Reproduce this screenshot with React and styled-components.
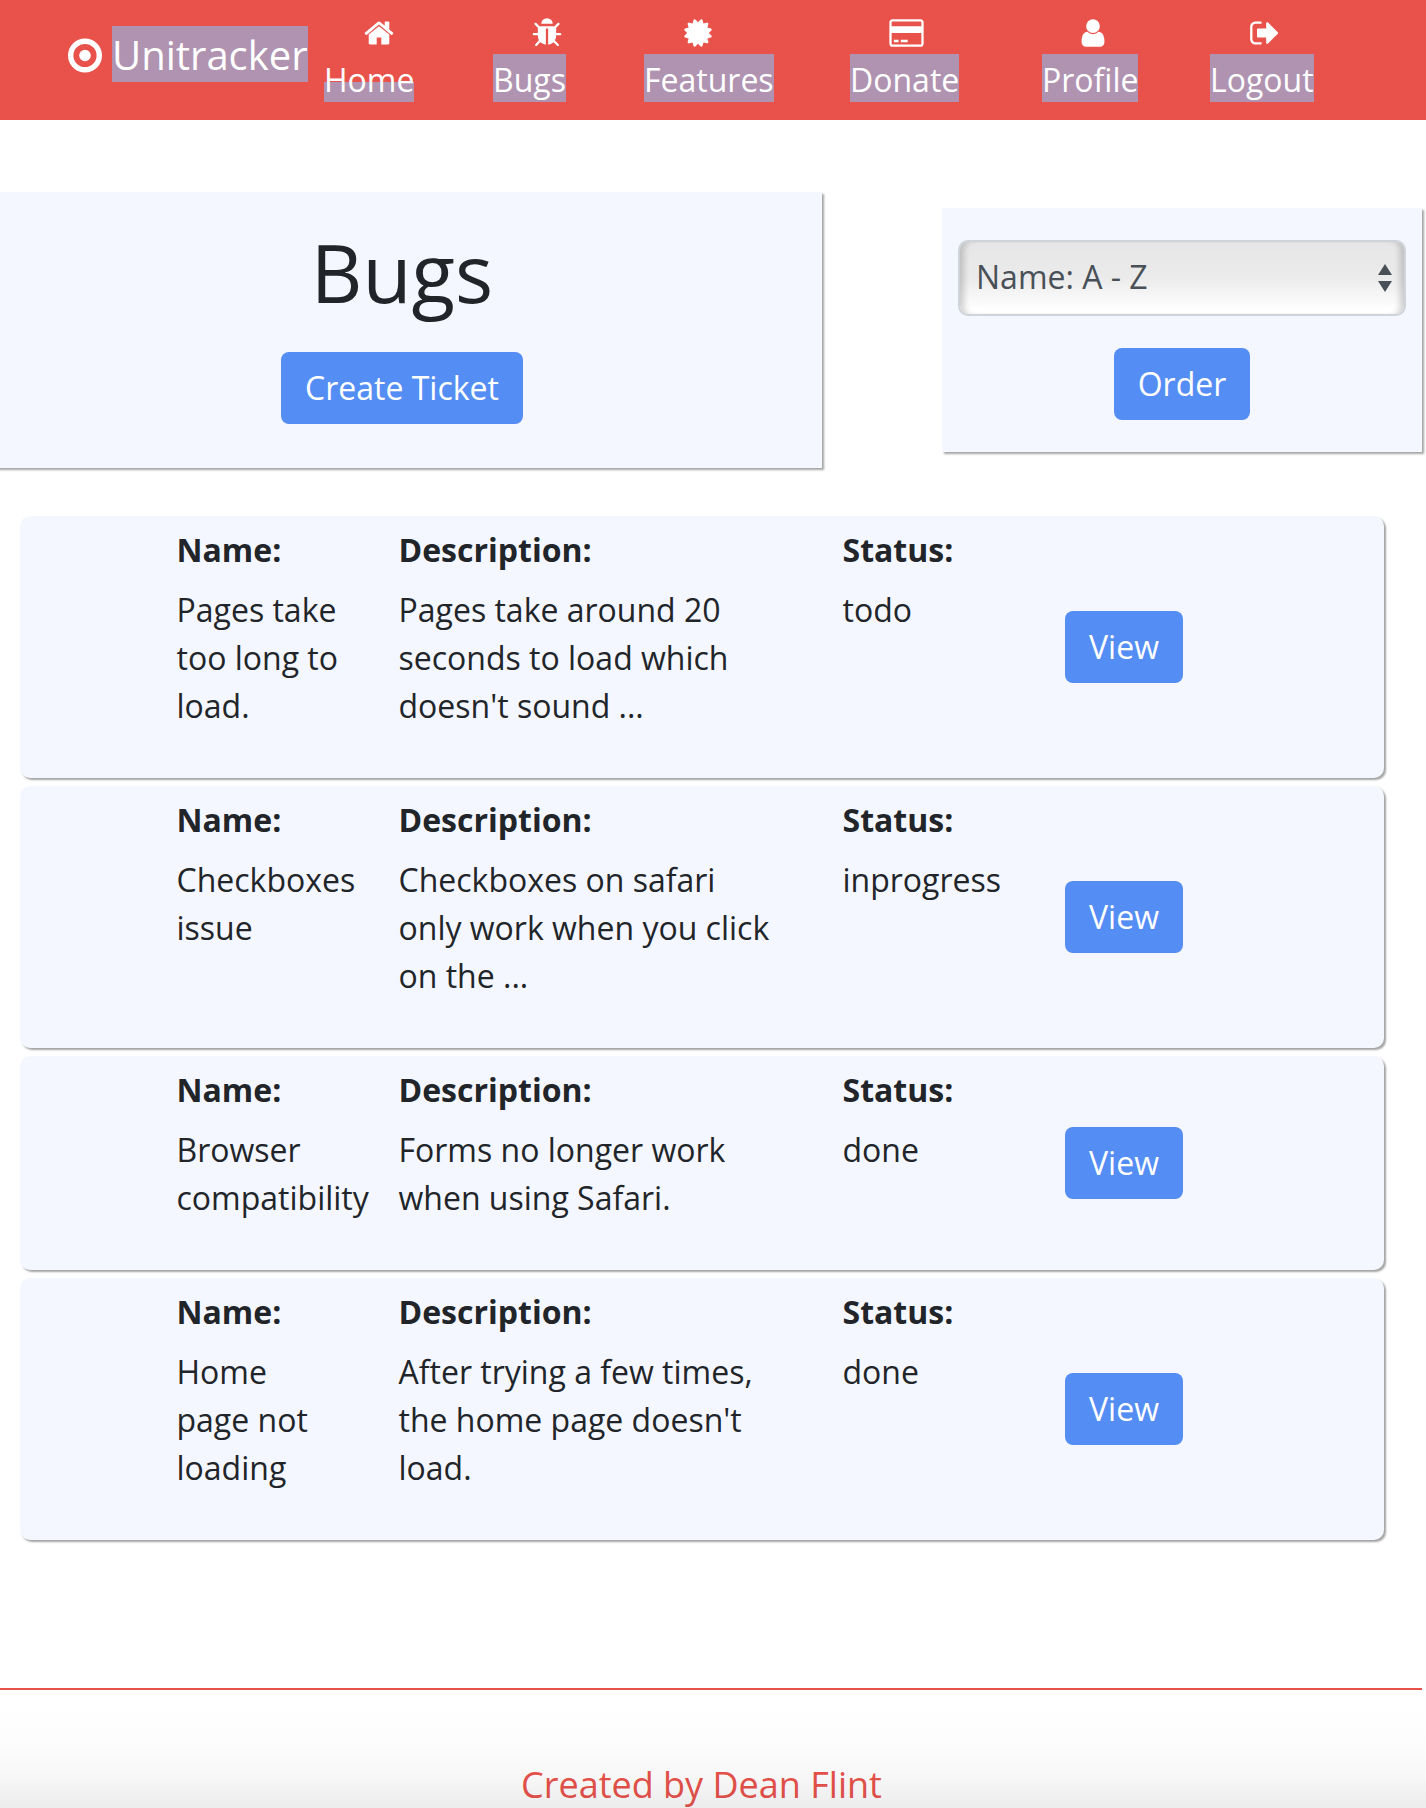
import React from "react";
import styled, { createGlobalStyle, css } from "styled-components";

const GlobalStyle = createGlobalStyle`
  *, *::before, *::after { box-sizing: border-box; }
  body {
    margin: 0;
    background: #fff;
    color: #212529;
    font-family: "Open Sans", "Noto Sans", sans-serif;
    font-size: 32px;
    line-height: 48px;
    overflow: hidden;
  }
`;

const Page = styled.div`
  display: flex;
  flex-direction: column;
  height: 1808px;
  overflow: hidden;
`;

const Header = styled.header`
  display: flex;
  height: 120px;
  background: #e9524b;
  color: #fff;
`;

const Brand = styled.a`
  display: flex;
  align-items: center;
  gap: 10px;
  height: 56px;
  margin: 26px 0 0 68px;
  font-size: 40px;
`;

const BrandName = styled.span`
  width: 196px;
  padding-top: 2px;
  line-height: 54px;
  background: #b093b1;
  white-space: nowrap;
`;

const Nav = styled.nav`
  display: flex;
  padding-top: 17px;
`;

const NavLink = styled.a`
  display: flex;
  flex-direction: column;
  width: ${(p) => p.$width}px;
  margin-left: ${(p) => p.$gap}px;
`;

const NavIcon = styled.svg`
  display: block;
  width: ${(p) => p.$width || 32}px;
  height: 32px;
  margin: 0 0 5px ${(p) => p.$shift}px;
  fill: currentColor;
  flex: none;
`;

const NavLabel = styled.span`
  padding-top: 4px;
  line-height: 44px;
  white-space: nowrap;
  background: ${(p) =>
    p.$partial ? "linear-gradient(transparent 28px, #b093b1 28px)" : "#b093b1"};
`;

const panel = css`
  background: #f4f7ff;
  box-shadow: 2px 2px 2px rgba(0, 0, 0, 0.36);
`;

const Toolbar = styled.section`
  display: flex;
  justify-content: space-between;
  align-items: center;
  margin-top: 72px;
  padding-right: 4px;
  height: 276px;
`;

const TitlePanel = styled.div`
  ${panel}
  display: flex;
  flex-direction: column;
  align-items: center;
  width: 840px;
  height: 276px;
  margin-left: -18px;
  padding-top: 32px;
`;

const Title = styled.h1`
  margin: 0 0 32px;
  font-size: 80px;
  font-weight: 400;
  line-height: 96px;
`;

const SortPanel = styled.form`
  ${panel}
  display: flex;
  flex-direction: column;
  align-items: center;
  gap: 32px;
  width: 480px;
  height: 244px;
  padding: 32px 16px;
`;

const Select = styled.div`
  display: flex;
  justify-content: space-between;
  align-items: center;
  width: 100%;
  height: 76px;
  padding: 0 12px 2px 16px;
  border: 2px solid #ced4da;
  border-radius: 10px;
  color: #495057;
  background: linear-gradient(#e6e6e6, #ebebeb 50%, #fff 94%);
  box-shadow: inset 8px 0 6px -4px rgba(0, 0, 0, 0.18),
    inset -8px 0 6px -4px rgba(0, 0, 0, 0.18);
`;

const Arrows = styled.svg`
  width: 14px;
  height: 28px;
  margin-top: 2px;
  fill: #495057;
`;

const Button = styled.button`
  height: 72px;
  padding: 0 24px;
  border: 0;
  border-radius: 8px;
  background: #548df4;
  color: #fff;
  font: inherit;
  white-space: nowrap;
`;

const TicketList = styled.main`
  display: flex;
  flex-direction: column;
  gap: 8px;
  margin: 48px 42px 0 20px;
`;

const Ticket = styled.article`
  ${panel}
  display: grid;
  grid-template-columns: 222px 444px 222px 222px;
  padding: 10px 0 48px 127px;
  border-radius: 10px;
`;

const Field = styled.div`
  padding: 0 30px 0 29.5px;
`;

const FieldLabel = styled.div`
  margin-bottom: 12px;
  font-weight: 700;
`;

const Action = styled.div`
  display: flex;
  align-items: center;
  padding-left: 30px;
  margin: -10px 0 -48px;
`;

const Footer = styled.footer`
  position: relative;
  height: 120px;
  margin: 148px 0 0;
  flex: none;
  color: #e9524b;
  font-size: 36px;
  line-height: 54px;
  text-align: center;

  &::after {
    content: "";
    position: absolute;
    inset: 14px 0 0;
    background: linear-gradient(
      rgba(0, 0, 0, 0),
      rgba(0, 0, 0, 0.008) 35%,
      rgba(0, 0, 0, 0.032) 70%,
      rgba(0, 0, 0, 0.075)
    );
  }
`;

const Credit = styled.p`
  margin: 0 4px 0 0;
  padding: 68px 19px 0 0;
  border-top: 2px solid #e9524b;
`;

const navItems = [
  {
    label: "Home", width: 90, gap: 16, shift: 38.5, partial: true,
    path: "M1472 992v480q0 26-19 45t-45 19h-384v-384h-256v384h-384q-26 0-45-19t-19-45v-480q0-1 .5-3t.5-3l575-474 575 474q1 2 1 6zm223-69l-62 74q-8 9-21 11h-3q-13 0-21-7l-692-577-692 577q-12 8-24 7-13-2-21-11l-62-74q-8-10-7-23.5t11-21.5l719-599q32-26 76-26t76 26l244 204v-195q0-14 9-23t23-9h192q14 0 23 9t9 23v408l219 182q10 8 11 21.5t-7 23.5z",
  },
  {
    label: "Bugs", width: 73, gap: 79, shift: 38,
    path: "M1696 960q0 26-19 45t-45 19h-224q0 171-67 290l208 209q19 19 19 45t-19 45q-18 19-45 19t-45-19l-198-197q-5 5-15 13t-42 28.5-65 36.5-82 29-97 13v-896h-128v896q-51 0-101.5-13.5t-87-33-66-39-43.5-32.5l-15-14-183 207q-20 21-48 21-24 0-43-16-19-18-20.5-44.5t15.5-46.5l202-227q-58-114-58-274h-224q-26 0-45-19t-19-45 19-45 45-19h224v-294l-173-173q-19-19-19-45t19-45 45-19 45 19l173 173h844l173-173q19-19 45-19t45 19 19 45-19 45l-173 173v294h224q26 0 45 19t19 45zm-480-576h-640q0-133 93.5-226.5t226.5-93.5 226.5 93.5 93.5 226.5z",
  },
  {
    label: "Features", width: 130, gap: 78, shift: 38,
    path: "M1504 896l138 135q30 28 20 70-12 41-52 51l-188 48 53 186q12 41-19 70-29 31-70 19l-186-53-48 188q-10 40-51 52-12 2-19 2-31 0-51-22l-135-138-135 138q-28 30-70 20-41-11-51-52l-48-188-186 53q-41 12-70-19-31-29-19-70l53-186-188-48q-40-10-52-51-10-42 20-70l138-135-138-135q-30-28-20-70 12-41 52-51l188-48-53-186q-12-41 19-70 29-31 70-19l186 53 48-188q10-41 51-51 41-12 70 19l135 139 135-139q29-30 70-19 41 10 51 51l48 188 186-53q41-12 70 19 31 29 19 70l-53 186 188 48q40 10 52 51 10 42-20 70z",
  },
  {
    label: "Donate", width: 109, gap: 76, shift: 39, iconWidth: 35, viewBox: "-64 0 1920 1792",
    path: "M1696 128q66 0 113 47t47 113v1216q0 66-47 113t-113 47h-1600q-66 0-113-47t-47-113v-1216q0-66 47-113t113-47zm-1600 128q-13 0-22.500 9.500t-9.500 22.500v224h1664v-224q0-13-9.500-22.500t-22.500-9.500zm1600 1280q13 0 22.500-9.500t9.500-22.500v-608h-1664v608q0 13 9.500 22.500t22.500 9.500zM192 1408v-128h256v128zm384 0v-128h384v128z",
  },
  {
    label: "Profile", width: 96, gap: 83, shift: 35,
    path: "M1536 1399q0 109-62.5 187t-150.5 78h-854q-88 0-150.5-78t-62.5-187q0-85 8.5-160.5t31.5-152 58.5-131 94-89 134.5-34.5q131 128 313 128t313-128q76 0 134.500 34.500t94 89 58.500 131 31.500 152 8.500 160.500zm-256-887q0 159-112.500 271.500t-271.500 112.500-271.500-112.500-112.500-271.500 112.500-271.500 271.500-112.500 271.500 112.500 112.500 271.500z",
  },
  {
    label: "Logout", width: 104, gap: 72, shift: 38.5,
    path: "M704 1440q0 4 1 20t.5 26.5-3 23.5-10 19.5-20.5 6.5h-320q-119 0-203.5-84.5t-84.5-203.5v-704q0-119 84.5-203.5t203.5-84.5h320q13 0 22.5 9.5t9.5 22.5q0 4 1 20t.5 26.5-3 23.5-10 19.5-20.5 6.5h-320q-66 0-113 47t-47 113v704q0 66 47 113t113 47h312l11.5 1 11.5 3 8 5.5 7 9 2 13.5zm928-544q0 26-19 45l-544 544q-19 19-45 19t-45-19-19-45v-288h-448q-26 0-45-19t-19-45v-384q0-26 19-45t45-19h448v-288q0-26 19-45t45-19 45 19l544 544q19 19 19 45z",
  },
];

const tickets = [
  { name: "Pages take too long to load.", description: "Pages take around 20 seconds to load which doesn't sound ...", status: "todo" },
  { name: "Checkboxes issue", description: "Checkboxes on safari only work when you click on the ...", status: "inprogress" },
  { name: "Browser compatibility", description: "Forms no longer work when using Safari.", status: "done" },
  { name: "Home page not loading", description: "After trying a few times, the home page doesn't load.", status: "done" },
];

export default function App() {
  return (
    <Page>
      <GlobalStyle />
      <Header>
        <Brand>
          <svg width="34" height="56" viewBox="0 0 34 56">
            <circle cx="17" cy="29.500" r="14.300" fill="none" stroke="#fff" strokeWidth="5.400" />
            <circle cx="17" cy="29.500" r="5.800" fill="#fff" />
          </svg>
          <BrandName>Unitracker</BrandName>
        </Brand>
        <Nav>
          {navItems.map((item) => (
            <NavLink key={item.label} $width={item.width} $gap={item.gap}>
              <NavIcon
                viewBox={item.viewBox || "0 0 1792 1792"}
                $width={item.iconWidth}
                $shift={item.shift}
              >
                <path d={item.path} />
              </NavIcon>
              <NavLabel $partial={item.partial}>{item.label}</NavLabel>
            </NavLink>
          ))}
        </Nav>
      </Header>
      <Toolbar>
        <TitlePanel>
          <Title>Bugs</Title>
          <Button>Create Ticket</Button>
        </TitlePanel>
        <SortPanel>
          <Select>
            Name: A - Z
            <Arrows viewBox="0 0 14 28">
              <path d="M7 0l7 11H0zM0 17h14l-7 11z" />
            </Arrows>
          </Select>
          <Button type="button">Order</Button>
        </SortPanel>
      </Toolbar>
      <TicketList>
        {tickets.map((ticket) => (
          <Ticket key={ticket.name}>
            <Field>
              <FieldLabel>Name:</FieldLabel>
              {ticket.name}
            </Field>
            <Field>
              <FieldLabel>Description:</FieldLabel>
              {ticket.description}
            </Field>
            <Field>
              <FieldLabel>Status:</FieldLabel>
              {ticket.status}
            </Field>
            <Action>
              <Button>View</Button>
            </Action>
          </Ticket>
        ))}
      </TicketList>
      <Footer>
        <Credit>Created by Dean Flint</Credit>
      </Footer>
    </Page>
  );
}
